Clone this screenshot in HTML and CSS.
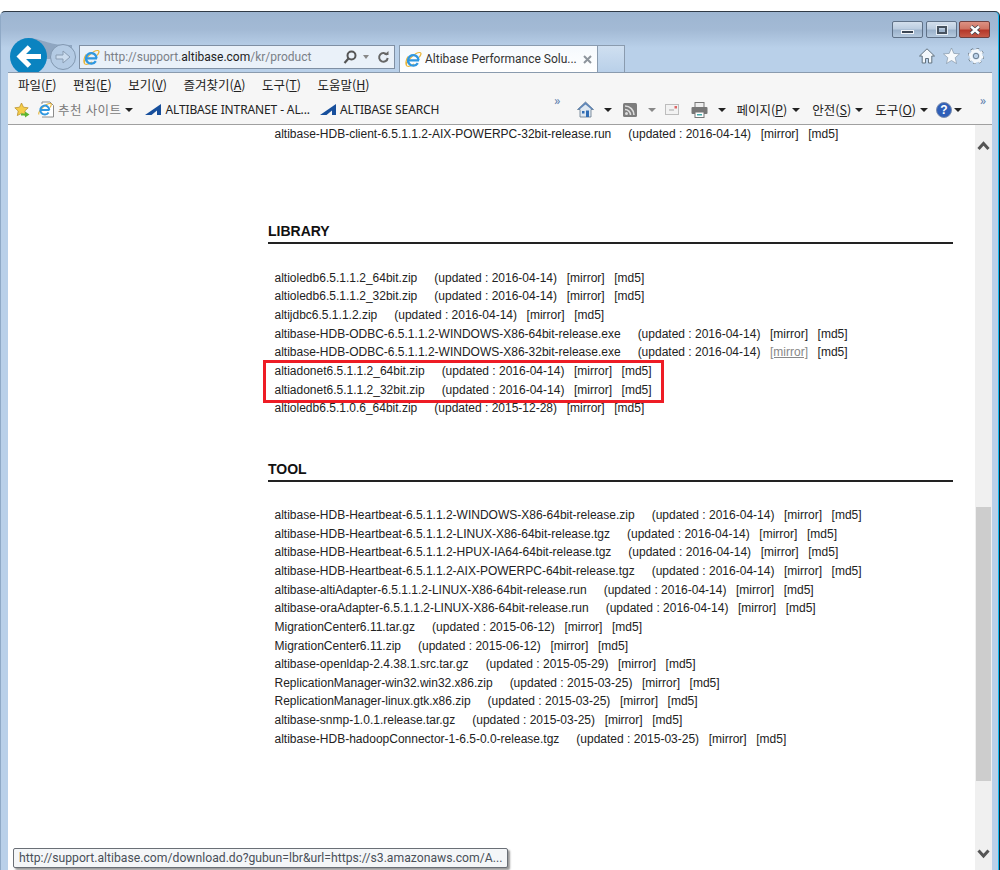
FILE: index.html
```html
<!DOCTYPE html>
<html lang="ko">
  <head>
    <meta charset="utf-8">
    <title>Altibase Performance Solution</title>
    <link rel="stylesheet" href="styles.css">
  </head>
  <body>
    <div class="window">
      <div class="titlebar">
        <svg class="back" width="62" height="37" viewBox="0 0 62 37"><path d="M18 0c14 0 20 8 44 7v14H18z" fill="#8fa6c1"/><circle cx="18.500" cy="18.500" r="18.500" fill="#0a83c0"/><path d="M31 18.500H11M19.500 9l-9.500 9.500 9.500 9.500" fill="none" stroke="#fff" stroke-width="5"/></svg>
        <div class="forward"><svg width="26" height="26" viewBox="0 0 26 26"><circle cx="13" cy="13" r="12.500" fill="#b4cbe4" stroke="#8298b0"/><path d="M6 11h7V7l7 6-7 6v-4H6z" fill="#cbdcee" stroke="#8a9db3"/></svg></div>
        <div class="address">
          <svg class="ie" width="17" height="17" viewBox="0 0 17 17"><path d="M1.500 14.500C.5 11 10 1 15 1.500c2 .5.500 3-1 5M3 5.500c-2 3-3 8-1 9.500 2 1 5-.5 7-2" fill="none" stroke="#e9b63a" stroke-width="1.200"/><path d="M3.500 9.300h10.500M13.600 9.300A5.300 5.300 0 1 0 12.800 12.200" fill="none" stroke="#2f97e0" stroke-width="2.300"/></svg>
          <span class="url">http://support.<b>altibase.com</b>/kr/product</span>
          <svg width="14" height="14" viewBox="0 0 14 14"><circle cx="8.500" cy="5.500" r="4" fill="none" stroke="#555" stroke-width="2"/><path d="M5.500 8.500l-4 4.500" stroke="#555" stroke-width="2.200"/></svg>
          <i class="caret caret-grey caret-small"></i>
          <svg class="refresh" width="12" height="14" viewBox="0 0 12 14"><path d="M10 5a4.300 4.300 0 1 0 .7 3" fill="none" stroke="#666" stroke-width="2"/><path d="M7 5h4.500V1z" fill="#666"/></svg>
        </div>
        <div class="tab">
          <svg width="17" height="17" viewBox="0 0 17 17"><path d="M1.500 14.500C.5 11 10 1 15 1.500c2 .5.500 3-1 5M3 5.500c-2 3-3 8-1 9.500 2 1 5-.5 7-2" fill="none" stroke="#e9b63a" stroke-width="1.200"/><path d="M3.500 9.300h10.500M13.600 9.300A5.300 5.300 0 1 0 12.800 12.200" fill="none" stroke="#2f97e0" stroke-width="2.300"/></svg>
          <span class="tab-title">Altibase Performance Solu...</span>
          <svg width="9" height="9" viewBox="0 0 9 9"><path d="M1 1l7 7M8 1L1 8" stroke="#8d949c" stroke-width="2"/></svg>
        </div>
        <div class="new-tab"></div>
        <div class="right-tools">
          <div class="caption">
            <div class="cap-btn"><i class="cap-min"></i></div>
            <div class="cap-btn"><i class="cap-max"></i></div>
            <div class="cap-btn cap-close"><svg width="14" height="10" viewBox="0 0 14 10"><path d="M3 1.500l8 7M11 1.500l-8 7" stroke="#39404a" stroke-width="4"/><path d="M3 1.500l8 7M11 1.500l-8 7" stroke="#fff" stroke-width="2.400"/></svg></div>
          </div>
          <div class="ie-tools">
            <svg width="16" height="16" viewBox="0 0 16 16"><path d="M8 .8L.5 8h2.700v7h3.300v-4.500h3V15h3.300V8h2.700z" fill="#f4f8fc" stroke="#62727f"/></svg>
            <svg width="17" height="16" viewBox="0 0 17 16"><path d="M8.500 0l2.300 5.400 5.700.5-4.300 3.800 1.300 5.800-5-3-5 3 1.300-5.800L.5 5.900l5.700-.5z" fill="#f6f9fc" stroke="#7b8b9c" stroke-width=".6"/></svg>
            <svg width="16" height="16" viewBox="0 0 16 16"><circle cx="8" cy="8" r="6.800" fill="none" stroke="#5d6d7c" stroke-width="2.800" stroke-dasharray="2.600 2.740"/><circle cx="8" cy="8" r="5" fill="none" stroke="#f4f8fc" stroke-width="3"/><circle cx="8" cy="8" r="6.800" fill="none" stroke="#f4f8fc" stroke-width="1.600" stroke-dasharray="2.600 2.740"/><circle cx="8" cy="8" r="2.700" fill="#b9d0e9" stroke="#5d6d7c" stroke-width=".8"/></svg>
          </div>
        </div>
      </div>

      <div class="client">
        <div class="menubar">
          <span>파일(<u>F</u>)</span>
          <span>편집(<u>E</u>)</span>
          <span>보기(<u>V</u>)</span>
          <span>즐겨찾기(<u>A</u>)</span>
          <span>도구(<u>T</u>)</span>
          <span>도움말(<u>H</u>)</span>
        </div>
        <div class="favbar">
          <svg class="fav-star" width="16" height="16" viewBox="0 0 16 16"><path d="M7.500 1l2 4.200 4.700.6-3.400 3.200.9 4.600-4.200-2.300-4.200 2.300.9-4.600L.8 5.800l4.700-.6z" fill="#f5cd4a" stroke="#b58a22" stroke-width=".7"/><path d="M7 11.500h4V9.500l4.500 3-4.500 3v-2H7z" fill="#5cb531"/></svg>
          <svg class="fav-page" width="16" height="17" viewBox="0 0 16 17"><path d="M4 3V1h8l3.500 3.500V16H4" fill="#fff" stroke="#8c8c8c"/><path d="M.8 13.500C0 10 8 2 12.500 2.500c1.500.3.500 2.500-.5 4" fill="none" stroke="#e9b63a" stroke-width="1.100"/><path d="M3 9h8.500M11.300 9A4.500 4.500 0 1 0 10.600 11.500" fill="none" stroke="#2f97e0" stroke-width="2"/></svg>
          <span class="grey-text">추천 사이트</span>
          <i class="caret"></i>
          <svg class="alti" width="16" height="12" viewBox="0 0 16 12"><path d="M0 11L16 0v11h-4V6.500L6.500 11z" fill="#174f9c"/></svg>
          <span class="fav-link">ALTIBASE INTRANET - AL...</span>
          <svg class="alti alti-two" width="16" height="12" viewBox="0 0 16 12"><path d="M0 11L16 0v11h-4V6.500L6.500 11z" fill="#174f9c"/></svg>
          <span class="fav-link">ALTIBASE SEARCH</span>
          <span class="chevrons chevrons-a">»</span>
          <div class="cmd-icons">
            <svg width="17" height="17" viewBox="0 0 17 17"><path d="M8.500 1L.5 8.500h2.500V16h11V8.500h2.500z" fill="#dfe8f1" stroke="#62768c" stroke-width=".8"/><path d="M9 9.500h3V16H9z" fill="#2f6cb4"/><path d="M5 10h2.500v2.500H5z" fill="#2f6cb4"/><path d="M8.500 1L.5 8.500h2l6-5 6 5h2z" fill="#5f86b8"/></svg>
            <i class="caret cmd-caret-a"></i>
            <svg class="rss" width="14" height="14" viewBox="0 0 14 14"><rect width="14" height="14" rx="1.500" fill="#7d7d7d"/><circle cx="3.500" cy="10.500" r="1.500" fill="#ddd"/><path d="M2 6.500a5.500 5.500 0 0 1 5.500 5.500M2 3a9 9 0 0 1 9 9" fill="none" stroke="#ddd" stroke-width="1.600"/></svg>
            <i class="caret caret-grey cmd-caret-b"></i>
            <svg class="mail" width="14" height="11" viewBox="0 0 14 11"><rect x=".5" y=".5" width="13" height="10" fill="#f2f2f2" stroke="#bdbdbd"/><path d="M4 6h5" stroke="#a8a8a8"/><rect x="9.500" y="2" width="2.500" height="2.500" fill="#d66"/></svg>
            <svg class="printer" width="17" height="16" viewBox="0 0 17 16"><rect x="4" y=".5" width="9" height="5" fill="#eee" stroke="#777"/><rect x=".5" y="5" width="16" height="7" rx="1" fill="#777"/><rect x="4" y="10" width="9" height="5.500" fill="#fff" stroke="#777"/><rect x="6" y="12" width="5" height="1.500" fill="#4aa"/></svg>
            <i class="caret cmd-caret-c"></i>
          </div>
          <span class="cmd">페이지(<u>P</u>)</span><i class="caret caret-page"></i>
          <span class="cmd cmd-safety">안전(<u>S</u>)</span><i class="caret"></i>
          <span class="cmd cmd-tools">도구(<u>O</u>)</span><i class="caret"></i>
          <svg class="help" width="16" height="16" viewBox="0 0 16 16"><circle cx="8" cy="8" r="7.500" fill="#2f5fb8" stroke="#7d8fb0"/><text x="8" y="12" text-anchor="middle" class="help-q">?</text></svg>
          <i class="caret caret-help"></i>
          <span class="chevrons chevrons-b">»</span>
        </div>

        <div class="viewport">
          <div class="page">
            <div class="files">
              <div class="row"><span class="name">altibase-HDB-client-6.5.1.1.2-AIX-POWERPC-32bit-release.run</span><span class="upd">(updated : 2016-04-14)</span><span class="lnk">[mirror]</span><span class="lnk">[md5]</span></div>
            </div>

            <h2 class="section section-library">LIBRARY</h2>
            <div class="files">
              <div class="row"><span class="name">altioledb6.5.1.1.2_64bit.zip</span><span class="upd">(updated : 2016-04-14)</span><span class="lnk">[mirror]</span><span class="lnk">[md5]</span></div>
              <div class="row"><span class="name">altioledb6.5.1.1.2_32bit.zip</span><span class="upd">(updated : 2016-04-14)</span><span class="lnk">[mirror]</span><span class="lnk">[md5]</span></div>
              <div class="row"><span class="name">altijdbc6.5.1.1.2.zip</span><span class="upd">(updated : 2016-04-14)</span><span class="lnk">[mirror]</span><span class="lnk">[md5]</span></div>
              <div class="row"><span class="name">altibase-HDB-ODBC-6.5.1.1.2-WINDOWS-X86-64bit-release.exe</span><span class="upd">(updated : 2016-04-14)</span><span class="lnk">[mirror]</span><span class="lnk">[md5]</span></div>
              <div class="row"><span class="name">altibase-HDB-ODBC-6.5.1.1.2-WINDOWS-X86-32bit-release.exe</span><span class="upd">(updated : 2016-04-14)</span><span class="lnk lnk-hover">[mirror]</span><span class="lnk">[md5]</span></div>
              <div class="row"><span class="name">altiadonet6.5.1.1.2_64bit.zip</span><span class="upd">(updated : 2016-04-14)</span><span class="lnk">[mirror]</span><span class="lnk">[md5]</span></div>
              <div class="row"><span class="name">altiadonet6.5.1.1.2_32bit.zip</span><span class="upd">(updated : 2016-04-14)</span><span class="lnk">[mirror]</span><span class="lnk">[md5]</span></div>
              <div class="row"><span class="name">altioledb6.5.1.0.6_64bit.zip</span><span class="upd">(updated : 2015-12-28)</span><span class="lnk">[mirror]</span><span class="lnk">[md5]</span></div>
            </div>

            <h2 class="section section-tool">TOOL</h2>
            <div class="files">
              <div class="row"><span class="name">altibase-HDB-Heartbeat-6.5.1.1.2-WINDOWS-X86-64bit-release.zip</span><span class="upd">(updated : 2016-04-14)</span><span class="lnk">[mirror]</span><span class="lnk">[md5]</span></div>
              <div class="row"><span class="name">altibase-HDB-Heartbeat-6.5.1.1.2-LINUX-X86-64bit-release.tgz</span><span class="upd">(updated : 2016-04-14)</span><span class="lnk">[mirror]</span><span class="lnk">[md5]</span></div>
              <div class="row"><span class="name">altibase-HDB-Heartbeat-6.5.1.1.2-HPUX-IA64-64bit-release.tgz</span><span class="upd">(updated : 2016-04-14)</span><span class="lnk">[mirror]</span><span class="lnk">[md5]</span></div>
              <div class="row"><span class="name">altibase-HDB-Heartbeat-6.5.1.1.2-AIX-POWERPC-64bit-release.tgz</span><span class="upd">(updated : 2016-04-14)</span><span class="lnk">[mirror]</span><span class="lnk">[md5]</span></div>
              <div class="row"><span class="name">altibase-altiAdapter-6.5.1.1.2-LINUX-X86-64bit-release.run</span><span class="upd">(updated : 2016-04-14)</span><span class="lnk">[mirror]</span><span class="lnk">[md5]</span></div>
              <div class="row"><span class="name">altibase-oraAdapter-6.5.1.1.2-LINUX-X86-64bit-release.run</span><span class="upd">(updated : 2016-04-14)</span><span class="lnk">[mirror]</span><span class="lnk">[md5]</span></div>
              <div class="row"><span class="name">MigrationCenter6.11.tar.gz</span><span class="upd">(updated : 2015-06-12)</span><span class="lnk">[mirror]</span><span class="lnk">[md5]</span></div>
              <div class="row"><span class="name">MigrationCenter6.11.zip</span><span class="upd">(updated : 2015-06-12)</span><span class="lnk">[mirror]</span><span class="lnk">[md5]</span></div>
              <div class="row"><span class="name">altibase-openldap-2.4.38.1.src.tar.gz</span><span class="upd">(updated : 2015-05-29)</span><span class="lnk">[mirror]</span><span class="lnk">[md5]</span></div>
              <div class="row"><span class="name">ReplicationManager-win32.win32.x86.zip</span><span class="upd">(updated : 2015-03-25)</span><span class="lnk">[mirror]</span><span class="lnk">[md5]</span></div>
              <div class="row"><span class="name">ReplicationManager-linux.gtk.x86.zip</span><span class="upd">(updated : 2015-03-25)</span><span class="lnk">[mirror]</span><span class="lnk">[md5]</span></div>
              <div class="row"><span class="name">altibase-snmp-1.0.1.release.tar.gz</span><span class="upd">(updated : 2015-03-25)</span><span class="lnk">[mirror]</span><span class="lnk">[md5]</span></div>
              <div class="row"><span class="name">altibase-HDB-hadoopConnector-1-6.5-0.0-release.tgz</span><span class="upd">(updated : 2015-03-25)</span><span class="lnk">[mirror]</span><span class="lnk">[md5]</span></div>
            </div>

            <div class="highlight"></div>
            <div class="status-tip">http://support.altibase.com/download.do?gubun=lbr&amp;url=https://s3.amazonaws.com/A...</div>
          </div>
          <div class="scrollbar">
            <svg class="arrow" width="17" height="16" viewBox="0 0 17 16"><path d="M3.500 11l5-5.500 5 5.500" fill="none" stroke="#555" stroke-width="3"/></svg>
            <div class="thumb"></div>
            <svg class="arrow arrow-down" width="17" height="16" viewBox="0 0 17 16"><path d="M3.500 5.500l5 5.500 5-5.500" fill="none" stroke="#555" stroke-width="3"/></svg>
          </div>
        </div>
      </div>
    </div>
  </body>
</html>
```

FILE: styles.css
```css
html, body {
  margin: 0;
  padding: 0;
  height: 100%;
  overflow: hidden;
  background: #fff;
}
body {
  font-family: "Liberation Sans", Arial, sans-serif;
  font-size: 12px;
  color: #222;
  padding-top: 11px;
  box-sizing: border-box;
}
svg {
  display: block;
  flex: none;
}

/* window frame */
.window {
  height: 859px;
  display: flex;
  flex-direction: column;
  box-sizing: border-box;
  border-top: 1px solid #2f3a46;
  border-left: 1px solid #8fa9c6;
  border-right: 1px solid #1c2530;
  border-radius: 5px 5px 0 0;
  background: linear-gradient(#9db5d1 0, #a3bad5 18px, #b9d0e9 36px, #b9d0e9 100%);
  box-shadow: inset -1px 0 0 #10b8f0;
  padding: 0 7px;
}
.titlebar {
  height: 60px;
  flex: none;
  display: flex;
  align-items: flex-end;
  margin: 0 -7px;
  padding-right: 9px;
  overflow: hidden;
}
.back {
  margin: 0 -25px -3px 9px;
}
.forward {
  margin: 0 0 2px 3px;
  flex: none;
  height: 26px;
  position: relative;
}
.address {
  width: 316px;
  height: 24px;
  box-sizing: border-box;
  margin: 0 4px 3px 3px;
  padding: 0 5px 0 3px;
  display: flex;
  align-items: center;
  flex: none;
  background: #eaf1f9;
  border: 1px solid #7f8fa3;
  color: #7a7f87;
  font-family: Roboto, sans-serif;
  font-size: 12px;
  position: relative;
}
.address .ie {
  margin-right: 4px;
}
.url {
  flex: 1;
  white-space: nowrap;
}
.url b {
  font-weight: 400;
  color: #222;
}
.refresh {
  margin-left: 8px;
}
.tab {
  width: 199px;
  height: 27px;
  box-sizing: border-box;
  flex: none;
  display: flex;
  align-items: center;
  gap: 3px;
  padding: 0 5px 0 5px;
  background: linear-gradient(#f5f9fd, #fff);
  border: 1px solid #8a9bae;
  border-bottom: 0;
  font-family: Roboto, sans-serif;
  font-size: 12px;
  color: #333;
}
.tab-title {
  flex: 1;
  white-space: nowrap;
}
.new-tab {
  width: 27px;
  height: 27px;
  box-sizing: border-box;
  flex: none;
  border: 1px solid #8a9bae;
  border-left: 0;
  border-bottom: 0;
  background: linear-gradient(#cfdff0, #b9d0e9);
}
.right-tools {
  margin-left: auto;
  align-self: stretch;
  display: flex;
  flex-direction: column;
  align-items: flex-end;
  padding-top: 9px;
}
.caption {
  display: flex;
  gap: 3px;
}
.cap-btn {
  width: 31px;
  height: 17px;
  box-sizing: border-box;
  border: 1px solid #5f7187;
  border-radius: 2px;
  background: linear-gradient(#d3dfec 0, #bccde0 45%, #9bb2cb 55%, #b5c9de 100%);
  display: flex;
  align-items: center;
  justify-content: center;
}
.cap-close {
  margin-left: -1px;
  background: linear-gradient(#dc9283 0, #cf7463 45%, #b5382a 55%, #c65a48 100%);
  border-color: #6e4040;
}
.cap-min {
  width: 11px;
  height: 2px;
  margin-top: 4px;
  background: #3b4654;
  border: 1px solid #f2f6fa;
}
.cap-max {
  width: 6px;
  height: 4px;
  border: 2px solid #46525f;
  outline: 1px solid #e6edf4;
}
.ie-tools {
  display: flex;
  gap: 8px;
  margin: 10px 6px 0 0;
}

/* menu and favorites */
.client {
  flex: 1;
  min-height: 0;
  display: flex;
  flex-direction: column;
  background: #fff;
  border-top: 1px solid #8a9bae;
}
.menubar {
  height: 22px;
  flex: none;
  display: flex;
  align-items: center;
  gap: 16.5px;
  padding-left: 10px;
  background: #f6f6f6;
  font-family: "Noto Sans CJK KR", sans-serif;
  font-size: 12.5px;
  color: #222;
}
.favbar {
  height: 29px;
  flex: none;
  display: flex;
  align-items: center;
  padding-left: 6px;
  background: #f6f6f6;
  border-bottom: 1px solid #a0a0a0;
  font-family: "Noto Sans", "Noto Sans CJK KR", sans-serif;
  font-size: 12px;
  color: #222;
  white-space: nowrap;
}
.fav-page {
  margin: 0 4px 0 8px;
}
.grey-text {
  color: #7a7a7a;
  font-family: "Noto Sans CJK KR", sans-serif;
  font-size: 12.5px;
  letter-spacing: .4px;
}
.fav-link {
  letter-spacing: -.12px;
}
.caret {
  display: block;
  flex: none;
  width: 0;
  height: 0;
  margin-left: 4px;
  border-left: 4px solid transparent;
  border-right: 4px solid transparent;
  border-top: 4px solid #222;
}
.caret-grey {
  border-top-color: #888;
}
.caret-small {
  margin-left: 6px;
  border-left-width: 3.5px;
  border-right-width: 3.5px;
}
.caret-page {
  margin-left: 5px;
}
.alti {
  margin: 0 4px 0 12px;
}
.alti-two {
  margin-left: 10px;
}
.chevrons {
  align-self: flex-start;
  color: #5f7fae;
  font-size: 12px;
  line-height: 12px;
}
.chevrons-a {
  margin-left: 115px;
}
.cmd-icons {
  display: flex;
  align-items: center;
  margin-left: 17px;
}
.cmd-caret-a {
  margin-left: 10px;
}
.rss {
  margin-left: 11px;
}
.cmd-caret-b {
  margin-left: 11px;
}
.mail {
  margin-left: 9px;
}
.printer {
  margin-left: 12px;
}
.cmd-caret-c {
  margin-left: 10px;
}
.cmd {
  margin-left: 10px;
  font-family: "Noto Sans CJK KR", sans-serif;
  font-size: 12.5px;
}
.cmd-safety {
  margin-left: 12px;
}
.cmd-tools {
  margin-left: 12px;
}
.help {
  margin-left: 8px;
}
.help-q {
  font-family: "Liberation Sans", sans-serif;
  font-size: 12px;
  font-weight: 700;
  fill: #fff;
}
.caret-help {
  margin-left: 2px;
}
.chevrons-b {
  margin-left: 18px;
}

/* page content */
.viewport {
  flex: 1;
  min-height: 0;
  display: flex;
}
.page {
  flex: 1;
  position: relative;
  padding-left: 260px;
  padding-right: 22px;
  color: #222;
}
.files {
  padding-left: 6.5px;
}
.row {
  height: 18.67px;
  line-height: 18.67px;
  white-space: nowrap;
}
.upd {
  margin-left: 17px;
}
.lnk {
  margin-left: 9.6px;
}
.lnk-hover {
  color: #888;
  text-decoration: underline;
}
.section {
  margin: 0 0 24px;
  font-size: 14px;
  line-height: 18px;
  font-weight: 700;
  color: #111;
  border-bottom: 2px solid #222;
  padding-bottom: 2px;
}
.section-library {
  margin-top: 78px;
  margin-bottom: 25px;
}
.section-tool {
  margin-top: 42px;
}
.highlight {
  position: absolute;
  left: 255px;
  top: 235px;
  width: 395px;
  height: 37px;
  border: 3px solid #ee1c25;
}
.status-tip {
  position: absolute;
  left: 5px;
  bottom: 2px;
  height: 20px;
  line-height: 18px;
  width: 495px;
  box-sizing: border-box;
  padding-left: 5px;
  background: #f4f6f8;
  border: 1px solid #6a6f76;
  border-radius: 2px;
  box-shadow: 2px 2px 2px #999;
  font-family: Roboto, sans-serif;
  font-size: 12.2px;
  color: #4a5058;
  white-space: nowrap;
}

/* scrollbar */
.scrollbar {
  width: 17px;
  flex: none;
  display: flex;
  flex-direction: column;
  background: #f0f0f0;
}
.arrow {
  margin-top: 13px;
}
.thumb {
  width: 15px;
  height: 274px;
  margin: 353px 0 0 1px;
  background: #cdcdcd;
}
.arrow-down {
  margin-top: 64px;
}
```
